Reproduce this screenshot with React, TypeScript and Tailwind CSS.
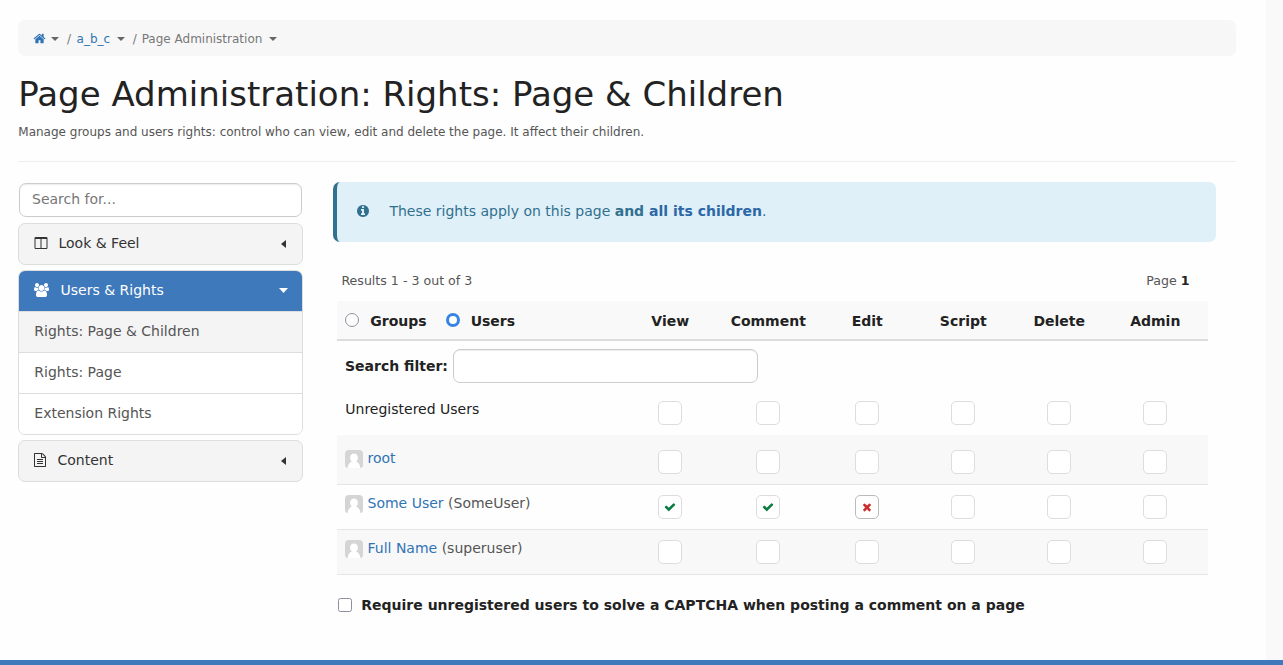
import type { ReactNode } from "react";

const paths = {
  home: "M1472 992v480q0 26-19 45t-45 19h-384v-384h-256v384h-384q-26 0-45-19t-19-45v-480q0-1 .5-3t.5-3l575-474 575 474q1 2 1 6zm223-69l-62 74q-8 9-21 11h-3q-13 0-21-7l-692-577-692 577q-12 8-24 7-13-2-21-11l-62-74q-8-10-7-23.5t11-21.5l719-599q32-26 76-26t76 26l244 204v-195q0-14 9-23t23-9h192q14 0 23 9t9 23v408l219 182q10 8 11 21.5t-7 23.5z",
  columns: "M224 1536h608v-1152h-640v1120q0 13 9.5 22.5t22.5 9.5zm1376-32v-1120h-640v1152h608q13 0 22.5-9.5t9.5-22.5zm128-1216v1216q0 66-47 113t-113 47h-1344q-66 0-113-47t-47-113v-1216q0-66 47-113t113-47h1344q66 0 113 47t47 113z",
  users: "M593 896q-162 5-265 128h-134q-82 0-138-40.5t-56-118.5q0-353 124-353 6 0 43.5 21t97.5 42.5 119 21.5q67 0 133-23-5 37-5 66 0 139 81 256zm1071 637q0 120-73 189.5t-194 69.5h-874q-121 0-194-69.5t-73-189.5q0-53 3.5-103.5t14-109 26.5-108.5 43-97.5 62-81 85.5-53.5 111.5-20q10 0 43 21.5t73 48 107 48 135 21.5 135-21.5 107-48 73-48 43-21.5q61 0 111.5 20t85.5 53.5 62 81 43 97.5 26.5 108.5 14 109 3.500 103.500zm-1024-1277q0 106-75 181t-181 75-181-75-75-181 75-181 181-75 181 75 75 181zm704 384q0 159-112.5 271.5t-271.5 112.5-271.5-112.5-112.5-271.5 112.5-271.5 271.5-112.5 271.5 112.5 112.5 271.5zm576 225q0 78-56 118.5t-138 40.5h-134q-103-123-265-128 81-117 81-256 0-29-5-66 66 23 133 23 59 0 119-21.5t97.5-42.5 43.5-21q124 0 124 353zm-128-609q0 106-75 181t-181 75-181-75-75-181 75-181 181-75 181 75 75 181z",
  file: "M1596 380q28 28 48 76t20 88v1152q0 40-28 68t-68 28h-1344q-40 0-68-28t-28-68v-1600q0-40 28-68t68-28h896q40 0 88 20t76 48zm-444-244v376h376q-10-29-22-41l-313-313q-12-12-41-22zm384 1528v-1024h-416q-40 0-68-28t-28-68v-416h-768v1536h1280zm-1024-864q0-14 9-23t23-9h704q14 0 23 9t9 23v64q0 14-9 23t-23 9h-704q-14 0-23-9t-9-23v-64zm736 224q14 0 23 9t9 23v64q0 14-9 23t-23 9h-704q-14 0-23-9t-9-23v-64q0-14 9-23t23-9h704zm0 256q14 0 23 9t9 23v64q0 14-9 23t-23 9h-704q-14 0-23-9t-9-23v-64q0-14 9-23t23-9h704z",
  info: "M1152 1376v-160q0-14-9-23t-23-9h-96v-512q0-14-9-23t-23-9h-320q-14 0-23 9t-9 23v160q0 14 9 23t23 9h96v320h-96q-14 0-23 9t-9 23v160q0 14 9 23t23 9h448q14 0 23-9t9-23zm-128-896v-160q0-14-9-23t-23-9h-192q-14 0-23 9t-9 23v160q0 14 9 23t23 9h192q14 0 23-9t9-23zm640 416q0 209-103 385.5t-279.5 279.5-385.5 103-385.5-103-279.5-279.5-103-385.5 103-385.5 279.5-279.5 385.5-103 385.5 103 279.5 279.5 103 385.5z",
  check: "M1671 566q0 40-28 68l-724 724-136 136q-28 28-68 28t-68-28l-136-136-362-362q-28-28-28-68t28-68l136-136q28-28 68-28t68 28l294 295 656-657q28-28 68-28t68 28l136 136q28 28 28 68z",
  times: "M1490 1322q0 40-28 68l-136 136q-28 28-68 28t-68-28l-294-294-294 294q-28 28-68 28t-68-28l-136-136q-28-28-28-68t28-68l294-294-294-294q-28-28-28-68t28-68l136-136q28-28 68-28t68 28l294 294 294-294q28-28 68-28t68 28l136 136q28 28 28 68t-28 68l-294 294 294 294q28 28 28 68z",
};

function Icon({ name, className, box = "0 0 1792 1792" }: { name: keyof typeof paths; className: string; box?: string }) {
  return (
    <svg viewBox={box} className={`shrink-0 fill-current ${className}`} aria-hidden="true">
      <path d={paths[name]} />
    </svg>
  );
}

function CaretDown({ className = "h-1 w-2" }: { className?: string }) {
  return (
    <svg viewBox="0 0 8 4" preserveAspectRatio="none" className={`shrink-0 fill-current ${className}`} aria-hidden="true">
      <path d="M0 0h8L4 4z" />
    </svg>
  );
}

function CaretLeft() {
  return (
    <svg viewBox="0 0 5 8" className="mt-px mr-px h-2 w-[5px] shrink-0 fill-current" aria-hidden="true">
      <path d="M5 0v8L0 4z" />
    </svg>
  );
}

function Avatar() {
  return (
    <svg viewBox="0 0 18 18" className="h-[18px] w-[18px] shrink-0" aria-hidden="true">
      <path d="M4 0h10a4 4 0 0 1 4 4v10q0 3.500-2 4H2q-2-.5-2-4V4a4 4 0 0 1 4-4z" fill="#d5d5d5" />
      <path d="M9 3.600c-2.500 0-3.900 1.800-3.900 4.200 0 1.600.7 3 1.800 3.800C4.600 12.400 3 14.500 2.600 18h12.800c-.4-3.500-2-5.600-4.300-6.400 1.100-.8 1.800-2.200 1.800-3.800 0-2.400-1.400-4.200-3.900-4.200z" fill="#fff" />
    </svg>
  );
}

type Right = "none" | "allow" | "deny";

function RightBox({ value }: { value: Right }) {
  return (
    <button
      className={`flex h-6 w-6 items-center justify-center justify-self-center rounded-[5px] border bg-white ${
        value === "deny" ? "border-[#bbb]" : "border-[#ddd]"
      }`}
    >
      {value === "allow" && <Icon name="check" className="h-3 w-3 text-[#0a7c42]" />}
      {value === "deny" && <Icon name="times" className="h-3 w-3 text-[#cb2c2c]" />}
    </button>
  );
}

const cols = "grid grid-cols-[284px_98px_98px_100px_92px_100px_92px_7px]";
const empty: Right[] = ["none", "none", "none", "none", "none", "none"];

function Row({ label, rights, className }: { label: ReactNode; rights: Right[]; className: string }) {
  return (
    <div className={`${cols} items-start ${className}`}>
      <div className="flex pl-2">{label}</div>
      {rights.map((r, i) => (
        <RightBox key={i} value={r} />
      ))}
    </div>
  );
}

function User({ name, login }: { name: string; login?: string }) {
  return (
    <>
      <Avatar />
      <span className="-mt-0.5 ml-[4.500px] leading-5 text-[#555]">
        <a className="text-[#3174b5]">{name}</a>
        {login && ` (${login})`}
      </span>
    </>
  );
}

function Sidebar() {
  return (
    <aside className="flex w-[285px] shrink-0 flex-col text-[14px] leading-5 text-[#333]">
      <input
        placeholder="Search for..."
        className="ml-px h-[34px] w-[283px] rounded-[7px] border border-[#ccc] bg-white px-3 pb-0.5 shadow-[inset_0_1px_1px_rgba(0,0,0,0.075)] placeholder:text-[#777]"
      />
      <div className="mt-1.5 flex h-[42px] items-center rounded-[7px] border border-[#ddd] bg-[#f4f4f4] pr-[15px] pb-0.5 pl-[15px]">
        <Icon name="columns" box="0 128 1728 1536" className="h-3 w-[13.500px]" />
        <span className="ml-[11px] flex-1">Look &amp; Feel</span>
        <CaretLeft />
      </div>
      <div className="mt-[5px] overflow-hidden rounded-[7px] border border-[#ddd]">
        <div className="flex h-10 items-center bg-[#3e79bb] pr-[14px] pb-0.5 pl-[15px] text-white">
          <Icon name="users" box="0 0 1920 1792" className="h-[14px] w-[15px]" />
          <span className="ml-[11.500px] flex-1">Users &amp; Rights</span>
          <CaretDown className="mt-px h-[5px] w-[9px]" />
        </div>
        {["Rights: Page & Children", "Rights: Page", "Extension Rights"].map((t, i) => (
          <div key={t} className={`flex h-[41px] items-center border-t border-[#ddd] pb-0.5 pl-[15.300px] text-[#555] ${i === 0 ? "bg-[#f4f4f4]" : "bg-white"}`}>
            {t}
          </div>
        ))}
      </div>
      <div className="mt-[5px] flex h-[42px] items-center rounded-[7px] border border-[#ddd] bg-[#f4f4f4] pr-[15px] pb-0.5 pl-[15px]">
        <Icon name="file" box="128 0 1536 1792" className="h-[14px] w-3" />
        <span className="ml-[11.500px] flex-1">Content</span>
        <CaretLeft />
      </div>
    </aside>
  );
}

export default function App() {
  return (
    <div className="flex h-[665px] w-[1283px] flex-col overflow-hidden bg-[#f9f9f9] [font-family:'DejaVu_Sans',sans-serif] text-[14px] text-[#222]">
      <div className="w-[1266px] flex-1 bg-[#fefefe] pt-5 pl-[18px]">
        <nav className="flex h-9 w-[1218px] items-center rounded-[7px] bg-[#f7f7f7] pt-[2px] pl-4 text-[12px] leading-[17px] text-[#777]">
          <Icon name="home" className="mb-px -ml-px h-[13px] w-[13px] text-[#3174b5]" />
          <CaretDown className="ml-[5px] h-1 w-2 text-[#666]" />
          <span className="ml-[8px]">/</span>
          <a className="ml-[5.500px] text-[#3174b5]">a_b_c</a>
          <CaretDown className="ml-[6.500px] h-1 w-2 text-[#666]" />
          <span className="ml-[8px]">/</span>
          <span className="ml-[5px]">Page Administration</span>
          <CaretDown className="ml-[6.500px] h-1 w-2 text-[#666]" />
        </nav>
        <h1 className="mt-[18px] h-10 pl-[0.300px] text-[34px] leading-10 whitespace-nowrap">Page Administration: Rights: Page &amp; Children</h1>
        <p className="mt-[10px] h-[17px] pl-[0.300px] text-[12px] leading-[17px] text-[#555]">
          Manage groups and users rights: control who can view, edit and delete the page. It affect their children.
        </p>
        <hr className="mt-[20px] w-[1218px] border-[#eee]" />
        <div className="mt-5 flex">
          <div className="pt-px">
            <Sidebar />
          </div>
          <main className="ml-[30px] w-[883px]">
            <div className="flex h-[60px] items-center rounded-[7px] border-l-4 border-[#31708f] bg-[#dff0f8] pb-0.5 pl-[19px] text-[#31708f]">
              <Icon name="info" className="h-[14px] w-[14px]" />
              <p className="ml-[19.400px] leading-5">
                These rights apply on this page <strong>and <span className="text-[#2c67a6]">all its children</span></strong>.
              </p>
            </div>
            <div className="ml-1 w-[871px]">
              <div className="mt-[29px] flex h-5 justify-between pr-[18.500px] pl-[4.400px] text-[12.600px] leading-5 text-[#555]">
                <span>Results 1 - 3 out of 3</span>
                <span>
                  Page <b className="text-[#222]">1</b>
                </span>
              </div>
              <div className={`${cols} mt-2.5 h-10 items-center border-b-2 border-[#ddd] bg-[#f9f9f9] pt-[2px] text-center font-bold`}>
                <div className="flex items-center pl-2">
                  <span className="mb-0.5 h-[14px] w-[14px] rounded-full border border-[#8f8f9d] bg-white" />
                  <span className="ml-[11.300px]">Groups</span>
                  <span className="mb-0.5 ml-[19px] h-[14px] w-[14px] rounded-full border-[3.500px] border-[#3584e4] bg-white" />
                  <span className="ml-[11px]">Users</span>
                </div>
                {["View", "Comment", "Edit", "Script", "Delete", "Admin"].map((h) => (
                  <div key={h} className="pl-[0.500px]">{h}</div>
                ))}
              </div>
              <div className="flex items-center pt-2 pl-2">
                <label className="font-bold">Search filter:</label>
                <input className="ml-[5px] h-[34px] w-[305px] rounded-[7px] border border-[#ccc] bg-white px-3 shadow-[inset_0_1px_1px_rgba(0,0,0,0.075)]" />
              </div>
              <Row label={<span className="-mt-0.5 pl-[0.300px] leading-5">Unregistered Users</span>} rights={empty} className="h-[52px] pt-[18px]" />
              <Row label={<User name="root" />} rights={empty} className="h-[50px] border-b border-[#e5e5e5] bg-[#f8f8f8] pt-[15px]" />
              <Row
                label={<User name="Some User" login="SomeUser" />}
                rights={["allow", "allow", "deny", "none", "none", "none"]}
                className="h-[45px] border-b border-[#e5e5e5] pt-2.5"
              />
              <Row label={<User name="Full Name" login="superuser" />} rights={empty} className="h-[45px] border-b border-[#e5e5e5] bg-[#f8f8f8] pt-2.5" />
              <label className="mt-5 flex h-5 items-center pl-px font-bold">
                <span className="h-[14px] w-[14px] rounded-[2.500px] border border-[#8f8f9d] bg-white" />
                <span className="ml-[9.300px]">Require unregistered users to solve a CAPTCHA when posting a comment on a page</span>
              </label>
            </div>
          </main>
        </div>
      </div>
      <div className="h-[5px] shrink-0 bg-[#3e79bb]" />
    </div>
  );
}
